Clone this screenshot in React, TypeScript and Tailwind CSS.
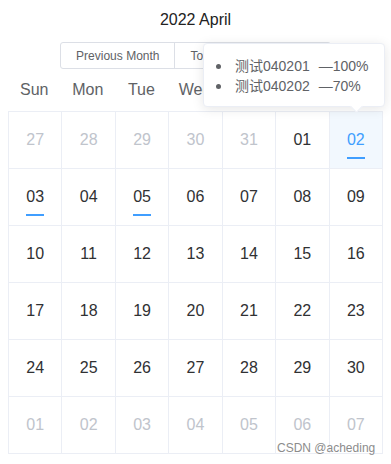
const weekdays = ['Sun', 'Mon', 'Tue', 'Wed', 'Thu', 'Fri', 'Sat']

type Day = { label: string; other?: boolean; marked?: boolean; selected?: boolean }

const days: Day[] = [
  { label: '27', other: true },
  { label: '28', other: true },
  { label: '29', other: true },
  { label: '30', other: true },
  { label: '31', other: true },
  { label: '01' },
  { label: '02', marked: true, selected: true },
  { label: '03', marked: true },
  { label: '04' },
  { label: '05', marked: true },
  ...Array.from({ length: 25 }, (_, i) => ({ label: String(i + 6).padStart(2, '0') })),
  ...Array.from({ length: 7 }, (_, i) => ({ label: String(i + 1).padStart(2, '0'), other: true })),
]

export default function App() {
  return (
    <div
      className="relative w-[391px] h-[464px] bg-white overflow-hidden"
      style={{ fontFamily: '"Liberation Sans", Arial, "Noto Sans CJK SC", sans-serif' }}
    >
      {/* Header */}
      <div className="pt-[10px] text-center text-[16px] leading-[20px] text-[#222]">2022 April</div>
      <div className="mt-[12px] flex justify-center">
        <div className="flex h-[27px] text-[12px] text-[#606266] border border-[#dcdfe6] rounded-[3px]">
          <button className="px-[15px] border-r border-[#dcdfe6]">Previous Month</button>
          <button className="px-[15px] border-r border-[#dcdfe6]">Today</button>
          <button className="px-[15px]">Next Month</button>
        </div>
      </div>

      {/* Weekdays */}
      <div className="mx-[8px] grid grid-cols-7 h-[42px] items-center text-[16px] text-[#606266]">
        {weekdays.map((d) => (
          <div key={d} className="text-center pr-[1px]">
            {d}
          </div>
        ))}
      </div>

      {/* Grid */}
      <div className="mx-[8px] grid grid-cols-7 border-l border-t border-[#ebeef5]">
        {days.map((d, i) => (
          <div
            key={i}
            className={`h-[57px] flex flex-col items-center pt-[18px] border-r border-b border-[#ebeef5] ${
              d.selected ? 'bg-[#f2f8fe]' : ''
            }`}
          >
            <span
              className={`text-[16px] leading-[20px] ${
                d.other ? 'text-[#c0c4cc]' : d.selected ? 'text-[#409eff]' : 'text-[#303133]'
              }`}
            >
              {d.label}
            </span>
            {d.marked && <span className="mt-[7px] w-[18px] h-[2px] bg-[#409eff]" />}
          </div>
        ))}
      </div>

      {/* Popover */}
      <div className="absolute left-[203px] top-[43px] w-[182px] h-[64px] bg-white border border-[#ebeef5] rounded-[4px] shadow-[0_2px_12px_0_rgba(0,0,0,0.1)] text-[14px] text-[#606266]">
        <ul className="pt-[12px] pl-[12px] leading-[20px]">
          <li className="flex items-center">
            <span className="w-[5px] h-[5px] rounded-full bg-[#606266] mr-[14px]" />
            <span>测试040201</span>
            <span className="ml-[9px]">—100%</span>
          </li>
          <li className="flex items-center">
            <span className="w-[5px] h-[5px] rounded-full bg-[#606266] mr-[14px]" />
            <span>测试040202</span>
            <span className="ml-[9px]">—70%</span>
          </li>
        </ul>
        <span className="absolute left-[148px] bottom-[-5px] w-[9px] h-[9px] bg-white rotate-45 border-r border-b border-[#ebeef5]" />
      </div>

      {/* Watermark */}
      <div className="absolute left-[277px] top-[439px] text-[12px] leading-[18px] text-[#8c8c8c]">
        CSDN @acheding
      </div>
    </div>
  )
}
